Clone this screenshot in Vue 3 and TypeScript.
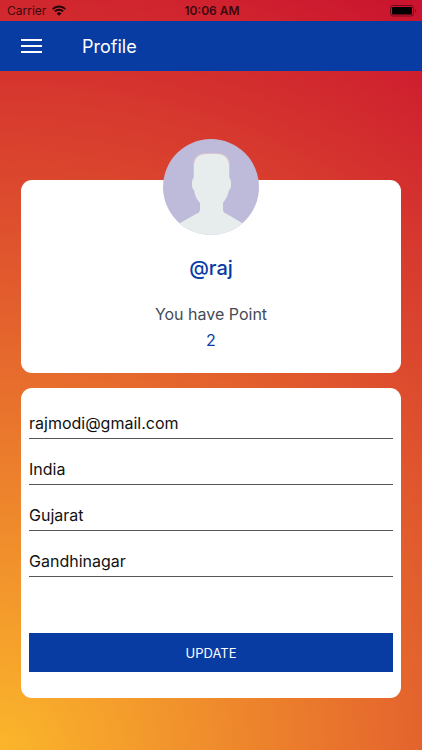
<script setup lang="ts">
import { reactive, ref } from 'vue'

interface Field {
  id: string
  label: string
  type: string
  value: string
}

const username = ref('@raj')
const points = ref(2)

const fields = reactive<Field[]>([
  { id: 'email', label: 'Email', type: 'email', value: 'rajmodi@gmail.com' },
  { id: 'country', label: 'Country', type: 'text', value: 'India' },
  { id: 'state', label: 'State', type: 'text', value: 'Gujarat' },
  { id: 'city', label: 'City', type: 'text', value: 'Gandhinagar' },
])
</script>

<template>
  <div class="screen">
    <div class="status">
      <div class="carrier">
        <span>Carrier</span>
        <svg class="wifi" viewBox="0 0 14 11" aria-hidden="true">
          <path d="M0.7 4.1a8.9 8.9 0 0 1 12.6 0" />
          <path d="M2.9 6.4a5.8 5.8 0 0 1 8.2 0" />
          <path class="dot" d="M7 10.8L4.6 8.4a3.4 3.4 0 0 1 4.8 0z" />
        </svg>
      </div>
      <span class="time">10:06 AM</span>
      <div class="power">
        <svg class="battery" viewBox="0 0 27 12" aria-hidden="true">
          <rect class="shell" x="0.5" y="0.5" width="23" height="10.5" rx="2.5" />
          <rect x="2" y="2" width="20" height="7.5" rx="1" />
          <path class="tip" d="M25 4c1.6 0.6 1.6 3 0 3.6z" />
        </svg>
      </div>
    </div>

    <header class="bar">
      <button class="menu" type="button" aria-label="Menu">
        <svg viewBox="0 0 21 16" aria-hidden="true">
          <path d="M0 2h21M0 8h21M0 14h21" />
        </svg>
      </button>
      <h1>Profile</h1>
    </header>

    <main class="content">
      <section class="card summary">
        <svg class="avatar" viewBox="0 0 96 96" role="img" aria-label="Profile picture">
          <defs>
            <clipPath id="avatar-clip"><circle cx="48" cy="48" r="48" /></clipPath>
          </defs>
          <g clip-path="url(#avatar-clip)">
            <rect width="96" height="96" fill="#bdbbd9" />
            <path
              class="hairline"
              d="M31 40V27C31 18 37 15 44 15H53C61 15 66 19 66 27V40"
            />
            <path
              fill="#e7eced"
              d="M31 39V27C31 18 37 15 44 15H53C61 15 66 19 66 27V39C68 40 68 42 68 45C68 48 68 50 66 51C65 57 62 61 60 64V70C60 73 61 74 64 75L79 84L96 96H0L17 84L33 75C36 74 37 73 37 70V64C34 61 32 57 31 51C29 50 29 48 29 45C29 42 29 40 31 39Z"
            />
          </g>
        </svg>
        <h2>{{ username }}</h2>
        <p class="caption">You have Point</p>
        <p class="points">{{ points }}</p>
      </section>

      <form class="card details" @submit.prevent>
        <div v-for="field in fields" :key="field.id" class="field">
          <input :id="field.id" v-model="field.value" :type="field.type" :aria-label="field.label" />
        </div>
        <button class="update" type="submit">UPDATE</button>
      </form>
    </main>
  </div>
</template>

<style>
body {
  margin: 0;
}
</style>

<style scoped>
.screen {
  box-sizing: border-box;
  min-height: 100vh;
  font-family: Inter, "Liberation Sans", sans-serif;
  background: radial-gradient(circle farthest-corner at 0% 100%, #fbb62b 0%, #e4632d 49%, #ca122f 100%);
}

.status {
  display: grid;
  grid-template-columns: 1fr auto 1fr;
  align-items: center;
  height: 21px;
  padding: 0 5px 0 7px;
  font-size: 12px;
  line-height: 20px;
  color: #3a0a10;
}

.carrier {
  display: flex;
  align-items: center;
  gap: 6px;
}

.wifi {
  width: 14px;
  height: 11px;
  fill: none;
  stroke: #1c0508;
  stroke-width: 2;
}

.wifi .dot {
  fill: #1c0508;
  stroke: none;
}

.time {
  font-weight: 600;
}

.power {
  display: flex;
  justify-content: flex-end;
}

.battery {
  width: 27px;
  height: 12px;
}

.battery .shell {
  fill: none;
  stroke: #6e0a1a;
}

.battery .tip {
  fill: #7d0b1d;
}

.bar {
  display: flex;
  align-items: center;
  gap: 40px;
  height: 50px;
  padding: 0 21px;
  background: #083ca3;
  color: #fff;
}

.menu {
  display: flex;
  padding: 0;
  border: 0;
  background: none;
}

.menu svg {
  width: 21px;
  height: 16px;
  stroke: #fff;
  stroke-width: 2;
}

h1,
h2,
p {
  margin: 0;
}

h1 {
  padding-top: 2px;
  font-size: 18px;
  font-weight: 400;
  line-height: 24px;
}

.content {
  display: flex;
  flex-direction: column;
  gap: 15px;
  padding: 109px 21px 52px;
}

.card {
  border-radius: 11px;
  background: #fff;
}

.summary {
  display: flex;
  flex-direction: column;
  align-items: center;
  padding-bottom: 20px;
  text-align: center;
}

.avatar {
  width: 96px;
  height: 96px;
  margin-top: -41px;
}

h2 {
  margin-top: 21px;
  font-size: 20px;
  font-weight: 500;
  line-height: 24px;
  color: #083ca3;
}

.caption {
  margin-top: 21px;
  font-size: 16px;
  line-height: 26px;
  color: #434b57;
}

.points {
  font-size: 16px;
  line-height: 26px;
  color: #083ca3;
}

.hairline {
  fill: none;
  stroke: #dcc3d2;
  stroke-width: 2;
}

.details {
  display: flex;
  flex-direction: column;
  padding: 5px 8px 26px;
}

.field {
  display: flex;
  padding-top: 16px;
}

.field input {
  box-sizing: border-box;
  width: 100%;
  height: 30px;
  padding: 0 0 2px;
  border: 0;
  border-bottom: 1px solid #555;
  border-radius: 0;
  outline: 0;
  background: transparent;
  font: inherit;
  font-size: 16px;
  color: #111;
}

.update {
  height: 39px;
  margin-top: 56px;
  padding: 0;
  border: 0;
  background: #083ca3;
  font: inherit;
  font-size: 13px;
  color: #fff;
}
</style>
